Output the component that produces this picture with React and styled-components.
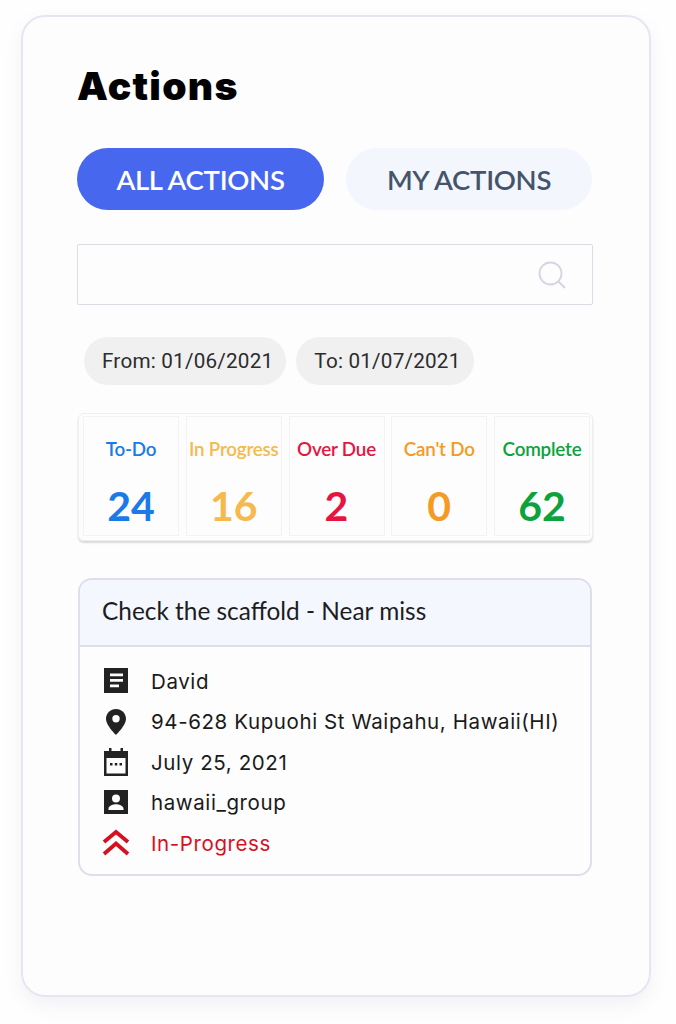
import React from "react";
import styled, { createGlobalStyle } from "styled-components";

const GlobalStyle = createGlobalStyle`
  * { box-sizing: border-box; }
  body {
    margin: 0;
    background: #fefefe;
    font-family: "Lato", sans-serif;
  }
`;

const Page = styled.main`
  width: 676px;
  height: 1024px;
  padding: 15px 25px 27px 21px;
  overflow: hidden;
`;

const Panel = styled.section`
  width: 630px;
  height: 982px;
  padding: 47px 57px 0 54px;
  background: #fdfdfe;
  border: 2px solid #e6e6f2;
  border-radius: 24px;
  box-shadow: 0 8px 18px rgba(120, 120, 170, 0.09);
`;

const Title = styled.h1`
  margin: 0 0 41px;
  height: 43px;
  font-family: "Inter", sans-serif;
  font-size: 39px;
  line-height: 43px;
  font-weight: 900;
  letter-spacing: 1.3px;
  color: #000;
`;

const Tabs = styled.div`
  display: grid;
  grid-template-columns: 247px 246px;
  column-gap: 22px;
  margin-bottom: 34px;
`;

const Tab = styled.div`
  height: 62px;
  display: flex;
  align-items: center;
  justify-content: center;
  border-radius: 31px;
  font-size: 27.5px;
  font-weight: 600;
  letter-spacing: -0.3px;
  color: ${(p) => (p.$active ? "#fff" : "#44546a")};
  background: ${(p) => (p.$active ? "#4667ee" : "#f3f6fd")};
`;

const Search = styled.div`
  width: 516px;
  height: 61px;
  display: flex;
  align-items: center;
  justify-content: flex-end;
  padding-right: 25px;
  border: 1px solid #dcdce6;
  border-radius: 2px;
  color: #d3d6df;
  margin-bottom: 32px;
`;

const Chips = styled.div`
  display: flex;
  gap: 10px;
  margin: 0 0 28px 7px;
`;

const Chip = styled.div`
  height: 48px;
  padding: 0 13px 0 18px;
  display: flex;
  align-items: center;
  border-radius: 24px;
  background: #f0f0f1;
  font-family: "Roboto", sans-serif;
  font-size: 20.7px;
  letter-spacing: 0.2px;
  color: #2c2c2c;
`;

const Stats = styled.div`
  width: 515px;
  height: 128px;
  margin-left: 1px;
  padding: 2px 3px 4px 4px;
  display: grid;
  grid-template-columns: repeat(5, 96px);
  column-gap: 6.750px;
  border: 1px solid #efeff2;
  border-radius: 6px;
  box-shadow: 0 2px 2px rgba(90, 90, 100, 0.22);
`;

const Stat = styled.div`
  border: 1px solid #f3f3f5;
  display: flex;
  flex-direction: column;
  align-items: center;
  padding-top: 20px;
  color: ${(p) => p.$color};
  white-space: nowrap;
`;

const StatLabel = styled.div`
  height: 24px;
  line-height: 24px;
  font-size: 18.8px;
  font-weight: 600;
  letter-spacing: -0.2px;
`;

const StatValue = styled.div`
  margin-top: 21px;
  line-height: 48px;
  font-size: 41px;
  font-weight: 700;
`;

const Detail = styled.article`
  width: 514px;
  height: 298px;
  margin: 37px 0 0 1px;
  border: 2px solid #dedeec;
  border-radius: 14px;
  overflow: hidden;
`;

const DetailHead = styled.header`
  height: 67px;
  display: flex;
  align-items: center;
  padding: 0 0 4px 22px;
  background: #f4f7fe;
  border-bottom: 2px solid #dedeec;
  font-size: 24.4px;
  color: #1d1d1f;
`;

const DetailBody = styled.div`
  padding: 14px 0 0 22px;
  display: flex;
  flex-direction: column;
`;

const Row = styled.div`
  height: 40.5px;
  display: flex;
  align-items: center;
  gap: 21px;
  font-family: "Inter", sans-serif;
  font-size: 20.5px;
  letter-spacing: 0.6px;
  color: ${(p) => p.$color || "#1a1a1a"};
  white-space: nowrap;
`;

const IconBox = styled.svg`
  width: 28px;
  height: 28px;
  flex: none;
`;

const NoteIcon = () => (
  <IconBox viewBox="0 0 28 28">
    <path
      fill="#222"
      fillRule="evenodd"
      d="M2 1h24v25H2zM8 6.500v2.800h13V6.500zM8 12v2.800h13V12zM8 17.500v2.800h9v-2.800z"
    />
  </IconBox>
);

const PinIcon = () => (
  <IconBox viewBox="0 0 28 28">
    <path
      fill="#222"
      fillRule="evenodd"
      d="M14 1c-5.600 0-10 4.300-10 9.800 0 6.800 10 16.200 10 16.200s10-9.400 10-16.200C24 5.300 19.600 1 14 1zM14 7a3.700 3.700 0 1 1 0 7.400A3.700 3.700 0 0 1 14 7z"
    />
  </IconBox>
);

const CalendarIcon = () => (
  <IconBox viewBox="0 0 28 28">
    <path
      fill="#222"
      fillRule="evenodd"
      d="M7 0h2.500v3h9V0H21v3h5v25H2V3h5zM4.500 10v15.500h19V10z"
    />
    <path fill="#222" d="M8 15h2.500v2.500H8zM12.800 15h2.500v2.500h-2.500zM17.500 15H20v2.500h-2.500z" />
  </IconBox>
);

const PersonIcon = () => (
  <IconBox viewBox="0 0 28 28">
    <path
      fill="#222"
      fillRule="evenodd"
      d="M2 1h24v24H2zM14 5.500a4 4 0 1 0 0 8 4 4 0 0 0 0-8zM6.500 21h15v-1.500c0-2.700-5-4.200-7.500-4.200s-7.500 1.500-7.500 4.200z"
    />
  </IconBox>
);

const DoubleUpIcon = () => (
  <IconBox viewBox="0 0 28 28">
    <path
      fill="none"
      stroke="#d6101f"
      strokeWidth="3.800"
      d="M2 13 14 3l12 10M2 25 14 14.500 26 25"
    />
  </IconBox>
);

const SearchIcon = () => (
  <svg width="30" height="30" viewBox="0 0 30 30" fill="none" stroke="currentColor" strokeWidth="1.800">
    <circle cx="13.500" cy="13.500" r="11" />
    <path d="M21.500 21.500 28 28" />
  </svg>
);

const stats = [
  { label: "To-Do", value: 24, color: "#1a7ae8" },
  { label: "In Progress", value: 16, color: "#f5b94c" },
  { label: "Over Due", value: 2, color: "#e5153f" },
  { label: "Can't Do", value: 0, color: "#f59a23" },
  { label: "Complete", value: 62, color: "#0ca23c" },
];

const rows = [
  { icon: <NoteIcon />, text: "David" },
  { icon: <PinIcon />, text: "94-628 Kupuohi St Waipahu, Hawaii(HI)" },
  { icon: <CalendarIcon />, text: "July 25, 2021" },
  { icon: <PersonIcon />, text: "hawaii_group" },
  { icon: <DoubleUpIcon />, text: "In-Progress", color: "#d6101f" },
];

export default function App() {
  return (
    <Page>
      <GlobalStyle />
      <Panel>
        <Title>Actions</Title>
        <Tabs>
          <Tab $active>ALL ACTIONS</Tab>
          <Tab>MY ACTIONS</Tab>
        </Tabs>
        <Search>
          <SearchIcon />
        </Search>
        <Chips>
          <Chip>From: 01/06/2021</Chip>
          <Chip>To: 01/07/2021</Chip>
        </Chips>
        <Stats>
          {stats.map((s) => (
            <Stat key={s.label} $color={s.color}>
              <StatLabel>{s.label}</StatLabel>
              <StatValue>{s.value}</StatValue>
            </Stat>
          ))}
        </Stats>
        <Detail>
          <DetailHead>Check the scaffold - Near miss</DetailHead>
          <DetailBody>
            {rows.map((r) => (
              <Row key={r.text} $color={r.color}>
                {r.icon}
                {r.text}
              </Row>
            ))}
          </DetailBody>
        </Detail>
      </Panel>
    </Page>
  );
}
